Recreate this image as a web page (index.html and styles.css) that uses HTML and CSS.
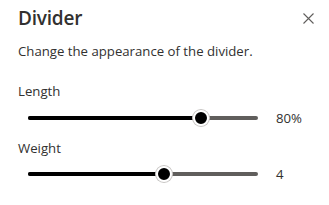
FILE: index.html
```html
<!DOCTYPE html>
<html>
<head>
<meta charset="utf-8">
<link rel="stylesheet" href="styles.css">
</head>
<body>
<div class="panel">
  <div class="header">
    <h1 class="title">Divider</h1>
    <button class="close" aria-label="Close">
      <svg width="11" height="11" viewBox="0 0 11 11"><path d="M0.5 0.5 L10.5 10.5 M10.5 0.5 L0.5 10.5" stroke="#605e5c" stroke-width="1.1" fill="none"/></svg>
    </button>
  </div>
  <p class="desc">Change the appearance of the divider.</p>
  <div class="field">
    <div class="label">Length</div>
    <div class="slider-row">
      <div class="track">
        <div class="fill" style="width:75%"></div>
        <div class="thumb" style="left:75%"></div>
      </div>
      <span class="value">80%</span>
    </div>
  </div>
  <div class="field">
    <div class="label">Weight</div>
    <div class="slider-row">
      <div class="track">
        <div class="fill" style="width:59%"></div>
        <div class="thumb" style="left:59%"></div>
      </div>
      <span class="value">4</span>
    </div>
  </div>
</div>
</body>
</html>
```
FILE: styles.css
```css
html, body {
  margin: 0;
  padding: 0;
  background: #ffffff;
}
body {
  font-family: "Open Sans", "Noto Sans", sans-serif;
  color: #323130;
}
.panel {
  width: 329px;
  height: 205px;
  box-sizing: border-box;
  padding: 4px 16px 0 18px;
}
.header {
  display: flex;
  justify-content: space-between;
  align-items: center;
  height: 28px;
}
.title {
  margin: 0;
  font-size: 19px;
  font-weight: 600;
  letter-spacing: -0.2px;
  color: #323130;
}
.close {
  border: 0;
  background: none;
  padding: 0;
  margin-right: -1px;
  margin-top: 1px;
  width: 11px;
  height: 11px;
  display: flex;
}
.desc {
  margin: 10px 0 0 0;
  font-size: 13.2px;
  line-height: 18px;
}
.field {
  margin-top: 22px;
}
.field + .field {
  margin-top: 7px;
}
.label {
  font-size: 13.2px;
  line-height: 18px;
}
.slider-row {
  display: flex;
  align-items: center;
  height: 28px;
  margin-top: 4px;
  padding-left: 10px;
}
.field + .field .slider-row {
  margin-top: 3px;
}
.track {
  position: relative;
  width: 230px;
  height: 4px;
  border-radius: 2px;
  background: #605e5c;
}
.fill {
  height: 4px;
  border-radius: 2px;
  background: #000000;
}
.thumb {
  position: absolute;
  top: 50%;
  width: 12px;
  height: 12px;
  border-radius: 50%;
  background: #000000;
  border: 2px solid #ffffff;
  box-shadow: 0 0 0 1px #c8c6c4;
  transform: translate(-50%, -50%);
}
.value {
  margin-left: 18px;
  font-size: 13.2px;
  color: #323130;
}
```
